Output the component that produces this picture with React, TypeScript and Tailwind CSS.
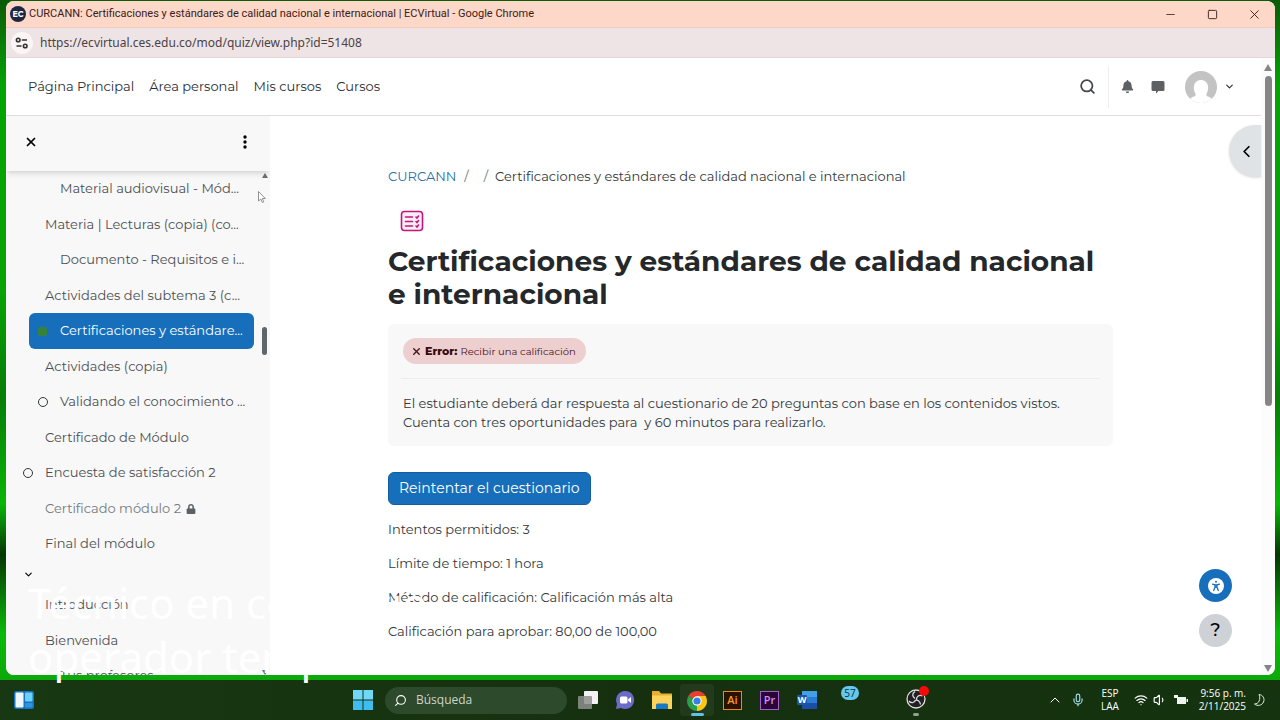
import type { ReactNode } from "react";
import { ChevronDown, ChevronLeft, ChevronUp, Mic, Minus, Search, Square, Volume1, Wifi, X } from "lucide-react";
import { FaBell, FaLock } from "react-icons/fa";

type CourseItem = {
  label: string;
  level: 1 | 2;
  status?: "todo" | "done";
  active?: boolean;
  locked?: boolean;
};

const courseItems: CourseItem[] = [
  { label: "Material audiovisual - Mód...", level: 2 },
  { label: "Materia | Lecturas (copia) (co...", level: 1 },
  { label: "Documento - Requisitos e i...", level: 2 },
  { label: "Actividades del subtema 3 (c...", level: 1 },
  { label: "Certificaciones y estándare...", level: 2, status: "done", active: true },
  { label: "Actividades (copia)", level: 1 },
  { label: "Validando el conocimiento ...", level: 2, status: "todo" },
  { label: "Certificado de Módulo", level: 1 },
  { label: "Encuesta de satisfacción 2", level: 1, status: "todo" },
  { label: "Certificado módulo 2", level: 1, locked: true },
  { label: "Final del módulo", level: 1 },
];

const nextItems: CourseItem[] = [
  { label: "Introducción", level: 1 },
  { label: "Bienvenida", level: 1 },
  { label: "Tus profesores", level: 2 },
];

const quizInfo = [
  "Intentos permitidos: 3",
  "Límite de tiempo: 1 hora",
  "Método de calificación: Calificación más alta",
  "Calificación para aprobar: 80,00 de 100,00",
];

function TitleBar() {
  return (
    <header className="flex h-[27px] shrink-0 items-center border-b border-[#f3cbbd] bg-[#fdd8c9] pl-1 text-[#3a2019]">
      <span className="flex size-4 shrink-0 items-center justify-center rounded-full bg-[#1d2742] text-[8px] font-bold text-white">
        EC
      </span>
      <h1 className="ml-[3px] flex-1 truncate font-[Roboto,sans-serif] text-[11px]">
        CURCANN: Certificaciones y estándares de calidad nacional e internacional | ECVirtual - Google Chrome
      </h1>
      <div className="flex shrink-0 items-center">
        <button aria-label="Minimizar" className="flex w-[42px] justify-center">
          <Minus size={13} strokeWidth={1.5} />
        </button>
        <button aria-label="Maximizar" className="flex w-[42px] justify-center">
          <Square size={11} strokeWidth={2} />
        </button>
        <button aria-label="Cerrar" className="flex w-[42px] justify-center">
          <X size={15} strokeWidth={1.5} />
        </button>
      </div>
    </header>
  );
}

function AddressBar() {
  return (
    <div className="flex h-[30px] shrink-0 items-center border-b border-[#ecd3d6] bg-[#efe4e5] pl-[5px]">
      <button aria-label="Información del sitio" className="flex size-[22px] shrink-0 items-center justify-center rounded-full bg-[#fbf5f5]">
        <svg viewBox="0 0 14 14" className="size-[14px]" fill="none" stroke="#333" strokeWidth="1.6">
          <circle cx="3.2" cy="4" r="1.8" />
          <path d="M6.8 4H12M1.5 10h5" />
          <circle cx="10.2" cy="10" r="1.8" />
        </svg>
      </button>
      <input
        aria-label="Dirección"
        readOnly
        value="https://ecvirtual.ces.edu.co/mod/quiz/view.php?id=51408"
        className="ml-[7px] flex-1 bg-transparent font-['Noto_Sans',sans-serif] text-[12px] text-[#4a4245] outline-none"
      />
    </div>
  );
}

function SiteNav() {
  return (
    <nav className="flex h-[58px] shrink-0 items-center border-b border-[#dcdfe2] bg-white pl-[22px] pr-[26px] text-[#2a2d30]">
      <div className="flex flex-1 gap-[15px] text-[13px]">
        <a href="#inicio">Página Principal</a>
        <a href="#area">Área personal</a>
        <a href="#mis-cursos">Mis cursos</a>
        <a href="#cursos">Cursos</a>
      </div>
      <button aria-label="Buscar" className="text-[#44484c]">
        <Search size={17} strokeWidth={2.5} />
      </button>
      <span className="mx-[12px] h-[42px] w-px bg-[#eceef0]" />
      <button aria-label="Notificaciones" className="text-[#5d6164]">
        <FaBell size={13} />
      </button>
      <button aria-label="Mensajes" className="ml-[17px]">
        <svg viewBox="0 0 14 14" className="size-[14px]" fill="#5d6164">
          <path d="M2 1h10a1.5 1.5 0 0 1 1.5 1.5v7A1.5 1.5 0 0 1 12 11H7.5L5 13.5V11H2A1.5 1.5 0 0 1 .5 9.5v-7A1.5 1.5 0 0 1 2 1Z" />
        </svg>
      </button>
      <button aria-label="Menú de usuario" className="ml-5 flex items-center gap-[7px]">
        <svg viewBox="0 0 32 32" className="size-8">
          <clipPath id="avatar">
            <circle cx="16" cy="16" r="16" />
          </clipPath>
          <g clipPath="url(#avatar)">
            <rect width="32" height="32" fill="#c3c3c3" />
            <path d="M3 32c1-5 5-6 7-7 1-1 1-2 0-3-3-7 0-13 6-13s9 6 6 13c-1 1-1 2 0 3 2 1 6 2 7 7Z" fill="#fff" />
          </g>
        </svg>
        <ChevronDown size={11} strokeWidth={2.5} />
      </button>
    </nav>
  );
}

function CourseRow({ item }: { item: CourseItem }) {
  return (
    <li className="flex odd:h-9 even:h-[35px]">
      <a
        href="#actividad"
        className={`flex flex-1 items-center whitespace-nowrap rounded-md ${
          item.active ? "bg-[#176fbb] text-white" : item.locked ? "text-[#75797d]" : "text-[#4b4f53]"
        } ${item.level === 2 ? "pl-[9px]" : "-ml-[6px]"}`}
      >
        <span className="flex w-[22px] shrink-0 items-center">
          {item.status === "todo" && <span className="size-[10px] rounded-full border border-[#33373a]" />}
          {item.status === "done" && <span className="size-[9px] rounded-[2px] bg-[#33833f]" />}
        </span>
        {item.label}
        {item.locked && <FaLock size={10} className="ml-[5px] text-[#5d6164]" />}
      </a>
    </li>
  );
}

function CourseIndex() {
  return (
    <aside className="flex w-[264px] shrink-0 flex-col overflow-hidden bg-[#f8f8f8]">
      <div className="z-10 flex h-[55px] shrink-0 items-center justify-between pb-[3px] pl-[18px] pr-[22px] shadow-md">
        <button aria-label="Cerrar índice del curso">
          <X size={14} strokeWidth={3} />
        </button>
        <button aria-label="Opciones">
          <svg viewBox="0 0 6 14" className="h-[14px] w-[6px]">
            <circle cx="3" cy="2" r="1.7" />
            <circle cx="3" cy="7" r="1.7" />
            <circle cx="3" cy="12" r="1.7" />
          </svg>
        </button>
      </div>
      <div className="flex min-h-0 flex-1 text-[13px]">
        <div className="min-w-0 flex-1 overflow-hidden pl-[23px] pr-[5px]">
          <ul>
            {courseItems.map((item) => (
              <CourseRow key={item.label} item={item} />
            ))}
          </ul>
          <button aria-label="Contraer sección" className="-ml-[6px] flex h-[25px] items-center">
            <ChevronDown size={11} strokeWidth={2.5} />
          </button>
          <ul>
            {nextItems.map((item) => (
              <CourseRow key={item.label} item={item} />
            ))}
          </ul>
        </div>
        <div className="flex w-[11px] flex-col items-center pt-[2px]">
          <svg viewBox="0 0 6 5" className="h-[5px] w-[6px]" fill="#6b6f72">
            <path d="m3 0 3 5H0Z" />
          </svg>
          <span className="mt-[149px] h-[28px] w-[5px] rounded-full bg-[#60676c]" />
          <svg viewBox="0 0 6 5" className="mt-auto h-[5px] w-[6px]" fill="#6b6f72">
            <path d="M0 0h6L3 5Z" />
          </svg>
        </div>
      </div>
    </aside>
  );
}

function QuizPage() {
  return (
    <main className="min-w-0 flex-1 bg-white pl-[118px] pr-[148px] pt-[50px] text-[#33373a]">
      <nav aria-label="Ruta" className="flex whitespace-pre text-[13px] leading-[20px]">
        <a href="#curso" className="text-[#2a6fa5]">CURCANN</a>
        <span className="ml-2 text-[#6a737b]">/</span>
        <span className="ml-[15px] mr-[7px] text-[#6a737b]">/</span>
        <span>Certificaciones y estándares de calidad nacional e internacional</span>
      </nav>
      <svg viewBox="0 0 24 24" className="ml-3 mt-[23px] size-6" fill="none" stroke="#c3157c" strokeWidth="1.6" strokeLinecap="round">
        <rect x="1.5" y="2.5" width="21" height="19" rx="3" fill="#fdeef6" />
        <path d="M5.5 8h7M5.5 12.500h7M5.5 17h7M16 8l1 1 1.500-2M16 12.500l1 1 1.500-2M16 17l1 1 1.500-2" />
      </svg>
      <h2 className="mt-[12px] text-[28px] font-bold leading-[33px] text-[#25282a]">
        Certificaciones y estándares de calidad nacional e internacional
      </h2>
      <section className="mt-[13px] rounded-md bg-[#f8f8f8] px-[13px] pb-[14px] pt-[14px] text-[13px]">
        <span className="ml-[2px] inline-flex h-[26px] items-center whitespace-nowrap rounded-full bg-[#edcfd0] pl-2 pr-[10px] align-top text-[10px] text-[#4a1218]">
          <X size={11} strokeWidth={3} />
          <strong className="mx-[3px] text-[11px] font-extrabold text-[#370a0e]">Error:</strong>Recibir una calificación
        </span>
        <hr className="mb-[15px] mt-[14px] border-[#ececed]" />
        <p className="ml-[2px] leading-[19px]">
          El estudiante deberá dar respuesta al cuestionario de 20 preguntas con base en los contenidos vistos.
          <br />
          Cuenta con tres oportunidades para&nbsp; y 60 minutos para realizarlo.
        </p>
      </section>
      <button className="mt-[26px] h-[33px] rounded-md border border-[#135e9f] bg-[#176fbb] px-[10px] text-[14px] text-white">
        Reintentar el cuestionario
      </button>
      <div className="mt-[15px] flex flex-col gap-[15px] text-[13px] leading-[19px]">
        {quizInfo.map((line) => (
          <p key={line}>{line}</p>
        ))}
      </div>
    </main>
  );
}

function PageScrollbar() {
  return (
    <div className="flex w-[14px] shrink-0 flex-col items-center bg-[#fcfcfc] pb-[3px] pt-[6px]">
      <svg viewBox="0 0 8 7" className="h-[7px] w-2" fill="#858585">
        <path d="m4 0 4 7H0Z" />
      </svg>
      <span className="mt-[5px] h-[330px] w-[7px] rounded-full bg-[#858585]" />
      <svg viewBox="0 0 8 7" className="mt-auto h-[7px] w-2" fill="#858585">
        <path d="M0 0h8L4 7Z" />
      </svg>
    </div>
  );
}

function TaskIcon({ label, children }: { label: string; children: ReactNode }) {
  return (
    <button aria-label={label} className="flex h-9 w-[37px] shrink-0 items-center justify-center">
      {children}
    </button>
  );
}

function Taskbar() {
  return (
    <footer className="flex h-10 shrink-0 items-center bg-linear-to-r from-[#173812] via-[#16300f] to-[#15330f] px-[14px] font-['Open_Sans',sans-serif] text-white">
      <button aria-label="Widgets">
        <svg viewBox="0 0 20 18" className="h-[18px] w-5">
          <rect width="20" height="18" rx="2" fill="#1673c4" />
          <rect x="1.5" y="1.5" width="8" height="15" rx="1" fill="#f1f6fb" />
          <rect x="11" y="1.5" width="7.5" height="9" rx="1" fill="#6bd0f7" />
          <rect x="11" y="12" width="7.5" height="4.5" rx="1" fill="#2a94e2" />
        </svg>
      </button>
      <div className="ml-[310px] flex flex-1 items-center">
        <TaskIcon label="Inicio">
          <svg viewBox="0 0 20 20" className="size-5">
            <path d="M0 0h9.500v9.500H0zM10.500 0H20v9.500h-9.500z" fill="#6fd8f8" />
            <path d="M0 10.500h9.500V20H0zM10.500 10.500H20V20h-9.500z" fill="#40bdf0" />
          </svg>
        </TaskIcon>
        <label className="ml-[4px] mr-[2px] flex h-[27px] w-[182px] shrink-0 items-center gap-[9px] rounded-full bg-[#2d4a2c] pl-[9px]">
          <Search size={13} className="-scale-x-100" />
          <input aria-label="Búsqueda" placeholder="Búsqueda" className="w-[120px] bg-transparent text-[12px] outline-none placeholder:text-[#cbd5ca]" />
        </label>
        <TaskIcon label="Vista de tareas">
          <svg viewBox="0 0 20 18" className="h-[18px] w-5">
            <rect x="6" width="14" height="13" rx="1" fill="#f3f3f3" />
            <rect y="5" width="14" height="13" rx="1" fill="#8d908d" fillOpacity=".85" />
          </svg>
        </TaskIcon>
        <TaskIcon label="Chat">
          <svg viewBox="0 0 20 20" className="size-5">
            <path d="M10 1a9 9 0 1 1-4 17l-5 1 1-5A9 9 0 0 1 10 1Z" fill="#6a6cc8" />
            <rect x="5" y="6.5" width="7.5" height="7" rx="1.5" fill="#fff" />
            <path d="m13 9.500 3-2.500v6l-3-2.500Z" fill="#fff" />
          </svg>
        </TaskIcon>
        <TaskIcon label="Explorador de archivos">
          <svg viewBox="0 0 22 20" className="h-5 w-[22px]">
            <path d="M1 1h7l2 2.500h11V19H1Z" fill="#e8ae2e" />
            <path d="M1 5.500h20V19H1Z" fill="#fbd35c" />
            <path d="M5 19v-4a1.500 1.500 0 0 1 1.500-1.500h9A1.500 1.500 0 0 1 17 15v4Z" fill="#1b78c2" />
          </svg>
        </TaskIcon>
        <div className="flex w-[34px] flex-col items-center rounded bg-white/5 pt-[7px]">
          <button aria-label="Google Chrome">
            <svg viewBox="0 0 20 20" className="size-5">
              <path d="M10 10 1.340 5A10 10 0 0 1 18.660 5Z" fill="#e5402f" />
              <path d="M10 10 18.660 5A10 10 0 0 1 10 20Z" fill="#fbc516" />
              <path d="M10 10v10A10 10 0 0 1 1.340 5Z" fill="#2a9e49" />
              <path d="M10 5h8.660L14.300 12.500Z" fill="#fbc516" />
              <circle cx="10" cy="10" r="4.7" fill="#fff" />
              <circle cx="10" cy="10" r="3.6" fill="#3b7de8" />
            </svg>
          </button>
          <span className="mt-[2px] h-[3px] w-[13px] rounded-full bg-[#62bfe6]" />
        </div>
        <TaskIcon label="Illustrator">
          <span className="flex size-[19px] items-center justify-center border border-[#e98a1c] bg-[#2b1200] text-[11px] font-semibold text-[#f79a28]">Ai</span>
        </TaskIcon>
        <TaskIcon label="Premiere Pro">
          <span className="flex size-[19px] items-center justify-center border border-[#a45fc8] bg-[#2a0638] text-[11px] font-semibold text-[#d58df5]">Pr</span>
        </TaskIcon>
        <TaskIcon label="Word">
          <svg viewBox="0 0 20 18" className="h-[18px] w-5">
            <rect x="5" width="15" height="6" fill="#41a0e8" />
            <rect x="5" y="6" width="15" height="6" fill="#2b7cd3" />
            <rect x="5" y="12" width="15" height="6" fill="#1b4fa5" />
            <rect y="4" width="10" height="10" rx="1" fill="#1a56b0" />
            <text x="5" y="12" textAnchor="middle" fontSize="9" fontWeight="700" fill="#fff">W</text>
          </svg>
        </TaskIcon>
        <span className="mb-[14px] ml-4 flex h-[14px] w-[18px] items-center justify-center rounded-full bg-[#64c9ee] text-[10px] text-[#10303c]">
          57
        </span>
        <button aria-label="OBS Studio" className="relative ml-[47px] flex flex-col items-center pt-[5px]">
          <svg viewBox="0 0 20 20" className="size-5" fill="none" stroke="#dedede" strokeWidth="1.3">
            <circle cx="10" cy="10" r="9" fill="#211f24" />
            <path d="M9 2.500c-3 2-3 5 0 7M16.500 7c-3.500-1.500-6 .5-6 3.500M14.500 15.500c-.5-3.500-3-5-5.500-4M3 12c2 2.500 5.500 2 6.500-1" />
          </svg>
          <span className="mt-1 h-[3px] w-[6px] rounded-full bg-[#92a08f]" />
          <span className="absolute -right-[3px] top-[2px] size-[10px] rounded-full bg-[#f50a0a]" />
        </button>
      </div>
      <div className="flex shrink-0 items-center text-center text-[10px] leading-[13px]">
        <ChevronUp size={16} strokeWidth={1.5} />
        <Mic size={14} strokeWidth={2} className="ml-[8px] text-[#a4dcec]" />
        <span className="ml-[15px] w-[20px]">
          ESP
          <br />
          LAA
        </span>
        <Wifi size={14} className="ml-[14px]" />
        <Volume1 size={14} strokeWidth={2} className="ml-[5px]" />
        <svg viewBox="0 0 14 12" className="ml-[7px] h-3 w-[14px]" fill="#f1f5f0">
          <path d="M0 1h4v3H0zM3 3h9v7H3zM12.500 5H14v3h-1.500z" />
        </svg>
        <time className="ml-[10px] w-[48px] whitespace-nowrap text-right">
          9:56 p. m.
          <br />
          2/11/2025
        </time>
        <svg viewBox="0 0 14 14" className="ml-[6px] size-[14px]" fill="none" stroke="#e2eae1">
          <path d="M7 1.500c4 .5 6 4 4.500 7.500-1.500 3.500-6 4.500-9 2C7 11 9 6 7 1.500Z" />
        </svg>
      </div>
    </footer>
  );
}

export default function App() {
  return (
    <div className="relative flex h-screen flex-col overflow-hidden bg-[linear-gradient(180deg,#0b5a08_0%,#06a306_12%,#08a406_40%,#077d05_55%,#0ab508_70%,#053704_77%,#0bb909_88%,#0c9a0a_100%)] font-[Montserrat,Inter,sans-serif]">
      <div className="mb-[5px] ml-[6px] mr-[5px] mt-px flex min-h-0 flex-1 flex-col overflow-hidden rounded-lg bg-white">
        <TitleBar />
        <AddressBar />
        <div className="flex min-h-0 flex-1">
          <div className="relative flex min-w-0 flex-1 flex-col">
            <SiteNav />
            <div className="flex min-h-0 flex-1">
              <CourseIndex />
              <QuizPage />
            </div>
            <button aria-label="Abrir bloques" className="absolute right-0 top-[67px] flex h-[52px] w-8 items-center rounded-l-full bg-[#e0e3e5] pl-[8px] shadow">
              <ChevronLeft size={19} strokeWidth={2.2} />
            </button>
            <div className="absolute bottom-[28px] right-[29px] flex flex-col gap-3">
              <button aria-label="Accesibilidad" className="flex size-[33px] items-center justify-center rounded-full bg-[#176fbb]">
                <svg viewBox="0 0 16 16" className="size-4" stroke="#176fbb" strokeWidth="1.3" strokeLinecap="round">
                  <circle cx="8" cy="8" r="8" fill="#fff" stroke="none" />
                  <circle cx="8" cy="3.8" r="1" fill="#176fbb" stroke="none" />
                  <path d="M4.500 6.200 7 6.800v2.500L5.700 12.500M11.500 6.200 9 6.800v2.500l1.300 3.200M7 7h2v2H7Z" fill="none" />
                </svg>
              </button>
              <button aria-label="Ayuda" className="size-[33px] rounded-full bg-[#ced1d6] text-[18px] font-medium text-black">
                ?
              </button>
            </div>
          </div>
          <PageScrollbar />
        </div>
      </div>
      <Taskbar />
      <svg viewBox="0 0 8 12" className="absolute left-[258px] top-[191px] h-3 w-2" fill="#fff" stroke="#777" strokeWidth=".8">
        <path d="M.5.500v9.500l2.300-2 1.500 3.500 1.500-.7-1.500-3.300h3Z" />
      </svg>
      <p className="pointer-events-none absolute bottom-[36px] left-[28px] whitespace-nowrap font-['Noto_Sans',sans-serif] text-[42px] leading-[54px] text-white">
        Técnico en comercio
        <br />
        operador temp
      </p>
    </div>
  );
}
